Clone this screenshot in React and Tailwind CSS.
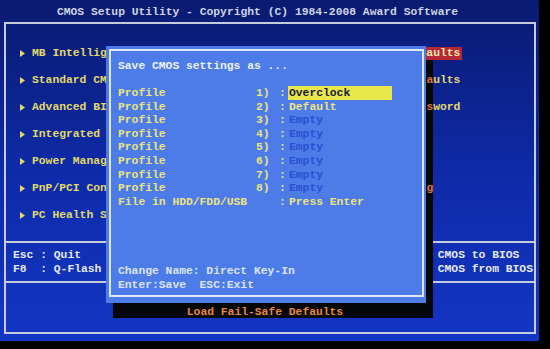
const menuLeft = [
  "MB Intelligent Tweaker(M.I.T.)",
  "Standard CMOS Features",
  "Advanced BIOS Features",
  "Integrated Peripherals",
  "Power Management Setup",
  "PnP/PCI Configurations",
  "PC Health Status",
];

const menuRight = [
  "Load Fail-Safe Defaults",
  "Load Optimized Defaults",
  "Set Supervisor Password",
  "Set User Password",
  "Save & Exit Setup",
  "Exit Without Saving",
];

const profiles = [
  { n: "1)", value: "Overclock", selected: true },
  { n: "2)", value: "Default" },
  { n: "3)", value: "Empty", empty: true },
  { n: "4)", value: "Empty", empty: true },
  { n: "5)", value: "Empty", empty: true },
  { n: "6)", value: "Empty", empty: true },
  { n: "7)", value: "Empty", empty: true },
  { n: "8)", value: "Empty", empty: true },
];

// column 18 of the right menu falls under the dialog's shadow
const SHADOW_COL = 18;

function Arrow() {
  return (
    <svg width="5" height="7" viewBox="0 0 5 7" className="shrink-0">
      <polygon points="0,0 5,3.5 0,7" fill="#e2d96a" />
    </svg>
  );
}

function ProfileRow({ label, n, value, selected, empty }) {
  return (
    <div className="flex h-[13.6px] items-center">
      <span className="w-[138px] text-[#ece47a]">{label}</span>
      <span className="w-[14px] text-[#ece47a]">{n}</span>
      <span className="ml-[9px] w-[7px] text-[#ece47a]">:</span>
      <span
        className={
          selected
            ? "ml-[2px] w-[104px] h-[14px] bg-[#e8e64a] pl-[1px] text-[#141a3a]"
            : empty
            ? "ml-[3px] text-[#2a4fd2]"
            : "ml-[3px] text-[#ece47a]"
        }
      >
        {value}
      </span>
    </div>
  );
}

function RightItem({ text, active, shaded }) {
  if (active) {
    return <span className="h-[13px] leading-[13px] bg-[#b4283a] text-[#f2eaa8] pr-[2px]">{text}</span>;
  }
  if (!shaded || text.length <= SHADOW_COL) {
    return <span className="text-[#e2d96a]">{text}</span>;
  }
  return (
    <span className="text-[#e2d96a]">
      {text.slice(0, SHADOW_COL)}
      <span className="relative z-10 text-[#e0703a]">{text[SHADOW_COL]}</span>
      {text.slice(SHADOW_COL + 1)}
    </span>
  );
}

export default function App() {
  return (
    <div className="relative w-[550px] h-[349px] overflow-hidden bg-black font-['Liberation_Mono',monospace] font-bold text-[11.33px] leading-[14px]">
      <div className="w-[539px] h-[341px] bg-linear-to-b from-[#0a1a70] via-[#0e2aa8] to-[#1336c4] flex flex-col">
        {/* title */}
        <div className="h-[22px] flex items-center justify-center pt-[2px] pr-[24px] text-[#cdd4e4] whitespace-pre">
          CMOS Setup Utility - Copyright (C) 1984-2008 Award Software
        </div>

        {/* main frame */}
        <div className="ml-[4px] w-[532px] h-[312px] border-2 border-[#c4ccdc] flex flex-col">
          <div className="h-[217px] flex pt-[15.5px]">
            <div className="w-[298px] pl-[14px] flex flex-col">
              {menuLeft.map((item) => (
                <div key={item} className="h-[27px] flex items-center gap-[7px] text-[#e2d96a] whitespace-pre">
                  <Arrow />
                  <span>{item}</span>
                </div>
              ))}
            </div>
            <div className="flex flex-col">
              {menuRight.map((item, i) => (
                <div key={item} className="h-[27px] flex items-center whitespace-pre">
                  <RightItem text={item} active={i === 0} shaded={i > 0} />
                </div>
              ))}
            </div>
          </div>

          <div className="h-[2px] bg-[#c4ccdc]" />

          {/* key help */}
          <div className="h-[38px] flex pl-[7px] pt-[5px] text-[#e6eaf4] whitespace-pre">
            <div className="w-[157px] flex flex-col">
              <span>Esc : Quit</span>
              <span>F8  : Q-Flash</span>
            </div>
            <div className="w-[193px] flex flex-col">
              <span>↑↓→←: Select Item</span>
              <span>F10 : Save &amp; Exit Setup</span>
            </div>
            <div className="flex flex-col">
              <span>F11 : Save CMOS to BIOS</span>
              <span>F12 : Load CMOS from BIOS</span>
            </div>
          </div>

          <div className="h-[2px] bg-[#c4ccdc]" />

          {/* item description, sits inside the dialog's shadow */}
          <div className="flex-1 flex justify-center pt-[22px] pr-[10px] whitespace-pre">
            <span className="relative z-10 text-[#e88a3c]">Load Fail-Safe Defaults</span>
          </div>
        </div>
      </div>

      {/* dialog shadow */}
      <div className="absolute left-[426px] top-[60px] w-[7px] h-[243px] bg-[#050608]" />
      <div className="absolute left-[113px] top-[303px] w-[320px] h-[15px] bg-[#050608]" />

      {/* save dialog */}
      <div className="absolute z-20 left-[106px] top-[46px] w-[320px] h-[257px] bg-[#4d7ce9] pt-[3px] pl-[3px] pr-[2px] pb-[6px]">
        <div className="h-full border-2 border-[#dfe6f5] pl-[7px] pt-[8px] flex flex-col whitespace-pre">
          <div className="h-[13.6px] flex items-center text-[#eef2fb]">Save CMOS settings as ...</div>
          <div className="mt-[13.6px] flex flex-col">
            {profiles.map((p) => (
              <ProfileRow key={p.n} label="Profile" {...p} />
            ))}
            <ProfileRow label="File in HDD/FDD/USB" n="" value="Press Enter" />
          </div>
          <div className="mt-[55px] flex flex-col text-[#dce4f6]">
            <div className="h-[14px] flex items-center">Change Name: Direct Key-In</div>
            <div className="h-[14px] flex items-center">Enter:Save  ESC:Exit</div>
          </div>
        </div>
      </div>
    </div>
  );
}
